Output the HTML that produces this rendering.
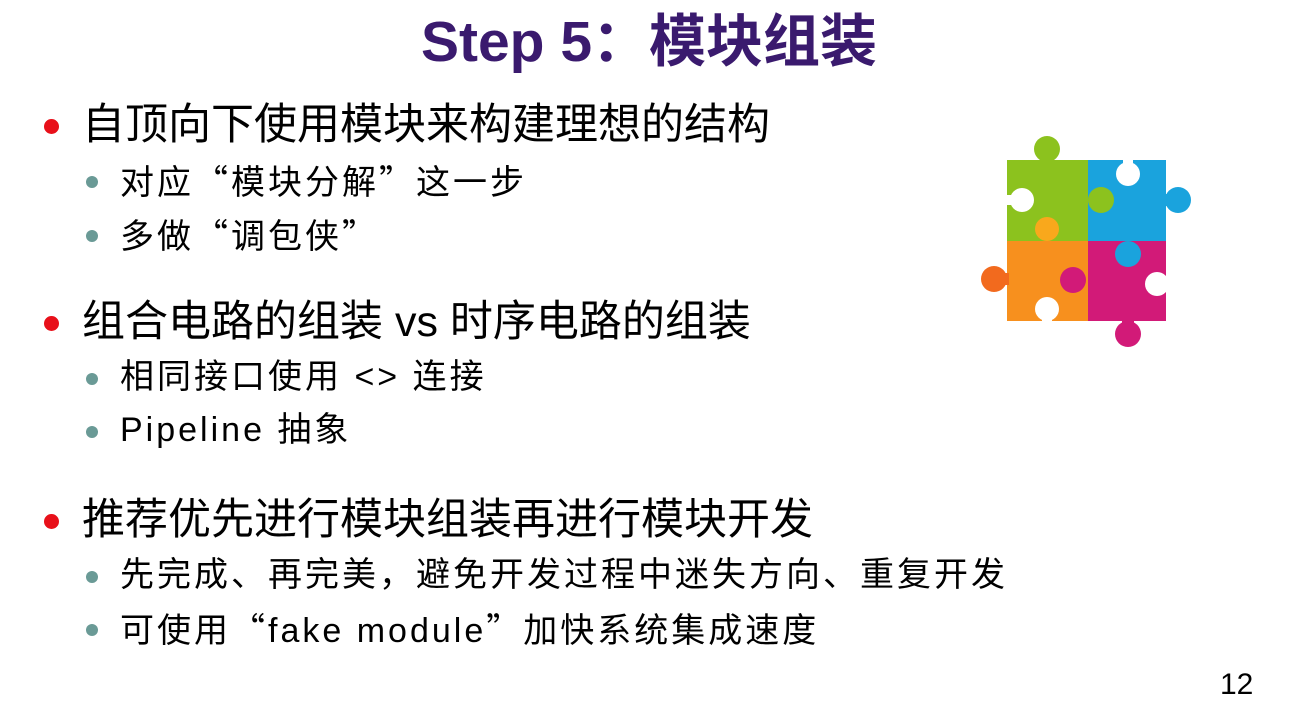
<!DOCTYPE html>
<html><head><meta charset="utf-8"><style>
body{margin:0;width:1298px;height:712px;background:#fff;position:relative;overflow:hidden;font-family:"Liberation Sans","Noto Sans CJK SC",sans-serif;color:#000}
.t{position:absolute;left:0;width:1298px;top:10px;text-align:center;font-size:57px;font-weight:bold;color:#3a1a6e;line-height:64px}
.l1,.l2{position:absolute;white-space:nowrap}
.l1{left:82px;font-size:43px;line-height:48px}
.l2{left:120px;font-size:34px;line-height:40px;letter-spacing:3px}
.l1:before{content:"";position:absolute;left:-38px;top:18px;width:15px;height:15px;border-radius:50%;background:#e8101a}
.l2:before{content:"";position:absolute;left:-34px;top:16px;width:12px;height:12px;border-radius:50%;background:#6a9a96}
.q{font-family:"Noto Sans CJK SC",sans-serif}
.n{position:absolute;left:1220px;top:668px;font-size:30px}
</style></head><body>
<div class="t">Step 5：模块组装</div>
<div class="l1" style="top:101px">自顶向下使用模块来构建理想的结构</div>
<div class="l2" style="top:160px">对应<span class="q">“</span>模块分解<span class="q">”</span>这一步</div>
<div class="l2" style="top:214px">多做<span class="q">“</span>调包侠<span class="q">”</span></div>
<div class="l1" style="top:298px">组合电路的组装 vs 时序电路的组装</div>
<div class="l2" style="top:357px">相同接口使用 &lt;&gt; 连接</div>
<div class="l2" style="top:410px">Pipeline 抽象</div>
<div class="l1" style="top:496px">推荐优先进行模块组装再进行模块开发</div>
<div class="l2" style="top:555px">先完成、再完美，避免开发过程中迷失方向、重复开发</div>
<div class="l2" style="top:608px">可使用<span class="q">“</span>fake module<span class="q">”</span>加快系统集成速度</div>
<div class="n">12</div>
<svg style="position:absolute;left:0;top:0" width="1298" height="712">
<rect x="1007" y="160" width="81" height="81" fill="#8cc21e"/>
<rect x="1088" y="160" width="78" height="81" fill="#1aa3dd"/>
<rect x="1007" y="241" width="81" height="80" fill="#f7901e"/>
<rect x="1088" y="241" width="78" height="80" fill="#d21a78"/>
<circle cx="1047" cy="149" r="13" fill="#8cc21e"/><rect x="1041" y="152" width="12" height="10" fill="#8cc21e"/>
<circle cx="1128" cy="174" r="12" fill="#fff"/><rect x="1123" y="158" width="10" height="8" fill="#fff"/>
<circle cx="1178" cy="200" r="13" fill="#1aa3dd"/><rect x="1163" y="194" width="8" height="12" fill="#1aa3dd"/>
<circle cx="1101" cy="200" r="13" fill="#8cc21e"/>
<circle cx="1022" cy="200" r="12" fill="#fff"/><rect x="1005" y="195" width="8" height="10" fill="#fff"/>
<circle cx="1047" cy="229" r="12" fill="#f9a81c"/>
<circle cx="994" cy="279" r="13" fill="#f26a1e"/><rect x="1000" y="273" width="9" height="12" fill="#f26a1e"/>
<circle cx="1047" cy="309" r="12" fill="#fff"/><rect x="1042" y="314" width="10" height="9" fill="#fff"/>
<circle cx="1073" cy="280" r="13" fill="#d21a78"/>
<circle cx="1128" cy="254" r="13" fill="#1aa3dd"/>
<circle cx="1157" cy="284" r="12" fill="#fff"/><rect x="1160" y="279" width="9" height="10" fill="#fff"/>
<circle cx="1128" cy="334" r="13" fill="#d21a78"/><rect x="1122" y="318" width="12" height="8" fill="#d21a78"/>
</svg>
</body></html>
